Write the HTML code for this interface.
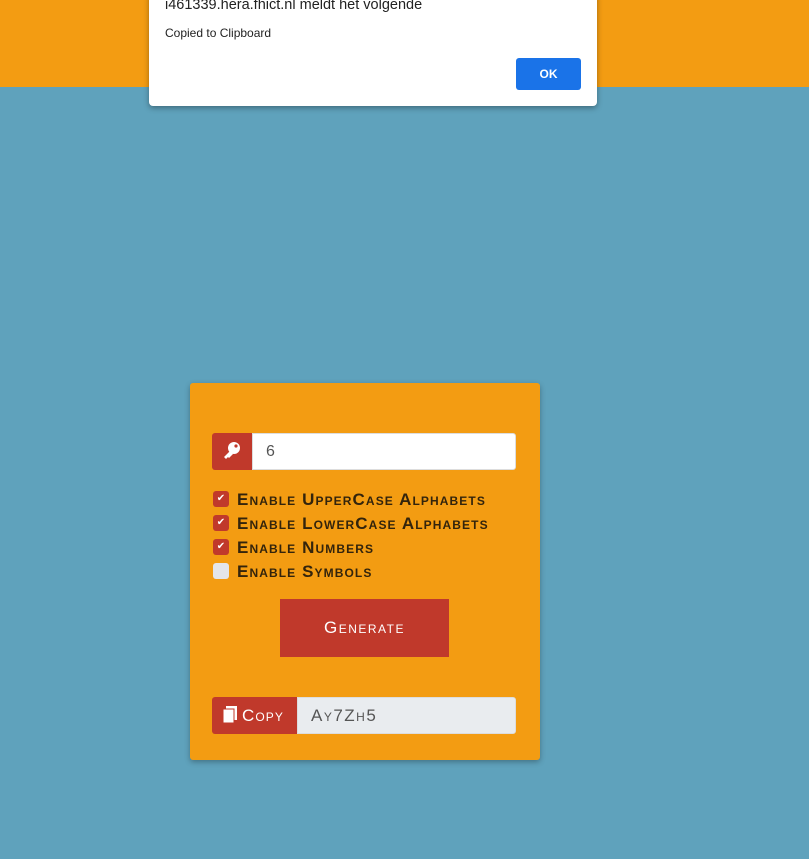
<!DOCTYPE html>
<html><head><style>
body{margin:0;width:809px;height:859px;background:#5fa2bc;position:relative;overflow:hidden;font-family:"Liberation Sans",sans-serif}
.hdr{position:absolute;left:0;top:0;width:809px;height:87px;background:#f39c12}
.dlg{position:absolute;left:149px;top:-8px;width:448px;height:114px;background:#fff;border-radius:4px;box-shadow:0 2px 6px rgba(0,0,0,.35)}
.dlg .t{position:absolute;left:16px;top:5px;font-size:14.5px;color:#222}
.dlg .m{position:absolute;left:16px;top:34px;font-size:12px;color:#222}
.dlg .ok{position:absolute;left:367px;top:66px;width:65px;height:32px;background:#1a73e8;border-radius:3px;color:#fff;font-size:12px;font-weight:bold;text-align:center;line-height:32px}
.card{position:absolute;left:190px;top:383px;width:350px;height:377px;background:#f39c12;border-radius:3px;box-shadow:0 2px 6px rgba(0,0,0,.3)}
.sc{font-variant:small-caps;font-weight:bold;letter-spacing:1.1px}
.grp{position:absolute;left:22px;width:304px;height:37px}
.grp .a{position:absolute;left:0;top:0;height:37px;background:#c0392b;border-radius:3px 0 0 3px}
.grp .b{position:absolute;top:0;right:0;height:35px;border:1px solid #ddd;border-radius:0 3px 3px 0;font-size:16px;color:#555;line-height:35px;padding-left:13px;box-sizing:content-box}
.cb{position:absolute;left:23px;font-size:17px;color:#33240c}
.cb i{position:absolute;left:0;top:1px;width:16px;height:16px;border-radius:3px;background:#c0392b;color:#fff;font-size:10px;text-align:center;line-height:16px;font-style:normal}
.cb span{position:absolute;left:24px;top:0;white-space:nowrap}
.gen{position:absolute;left:90px;top:216px;width:169px;height:58px;background:#c0392b;color:#fff;font-size:17px;font-weight:normal;letter-spacing:1.5px;text-align:center;line-height:58px}
</style></head><body>
<div class="hdr"></div>
<div class="dlg"><div class="t">i461339.hera.fhict.nl meldt het volgende</div><div class="m">Copied to Clipboard</div><div class="ok">OK</div></div>
<div class="card">
 <div class="grp" style="top:50px"><div class="a" style="width:40px"><svg width="40" height="37" viewBox="0 0 40 37"><circle cx="22" cy="15" r="6" fill="#fff"/><circle cx="24" cy="13" r="1.6" fill="#c0392b"/><path d="M18 18 L12 24 L14 26 L16 24 L17 25 L19 23 L21 21 Z" fill="#fff"/></svg></div><div class="b" style="left:40px;width:249px;background:#fff;letter-spacing:1px">6</div></div>
 <div class="cb" style="top:107px"><i>✔</i><span class="sc">Enable UpperCase Alphabets</span></div>
 <div class="cb" style="top:131px"><i>✔</i><span class="sc">Enable LowerCase Alphabets</span></div>
 <div class="cb" style="top:155px"><i>✔</i><span class="sc">Enable Numbers</span></div>
 <div class="cb" style="top:179px"><i style="background:#e4e6ea"></i><span class="sc">Enable Symbols</span></div>
 <div class="gen sc" style="font-weight:normal">Generate</div>
 <div class="grp" style="top:314px"><div class="a sc" style="width:85px;color:#fff;font-size:17px;font-weight:normal;line-height:37px"><svg width="16" height="18" viewBox="0 0 16 18" style="position:absolute;left:10px;top:9px"><rect x="4" y="0" width="11" height="14" fill="#fff"/><rect x="1" y="3" width="11" height="14" fill="#fff" stroke="#c0392b" stroke-width="1"/></svg><span style="position:absolute;left:30px">Copy</span></div><div class="b sc" style="left:85px;width:204px;background:#e9ecef;font-weight:normal;font-size:17px;letter-spacing:1.5px">Ay7Zh5</div></div>
</div>
</body></html>
